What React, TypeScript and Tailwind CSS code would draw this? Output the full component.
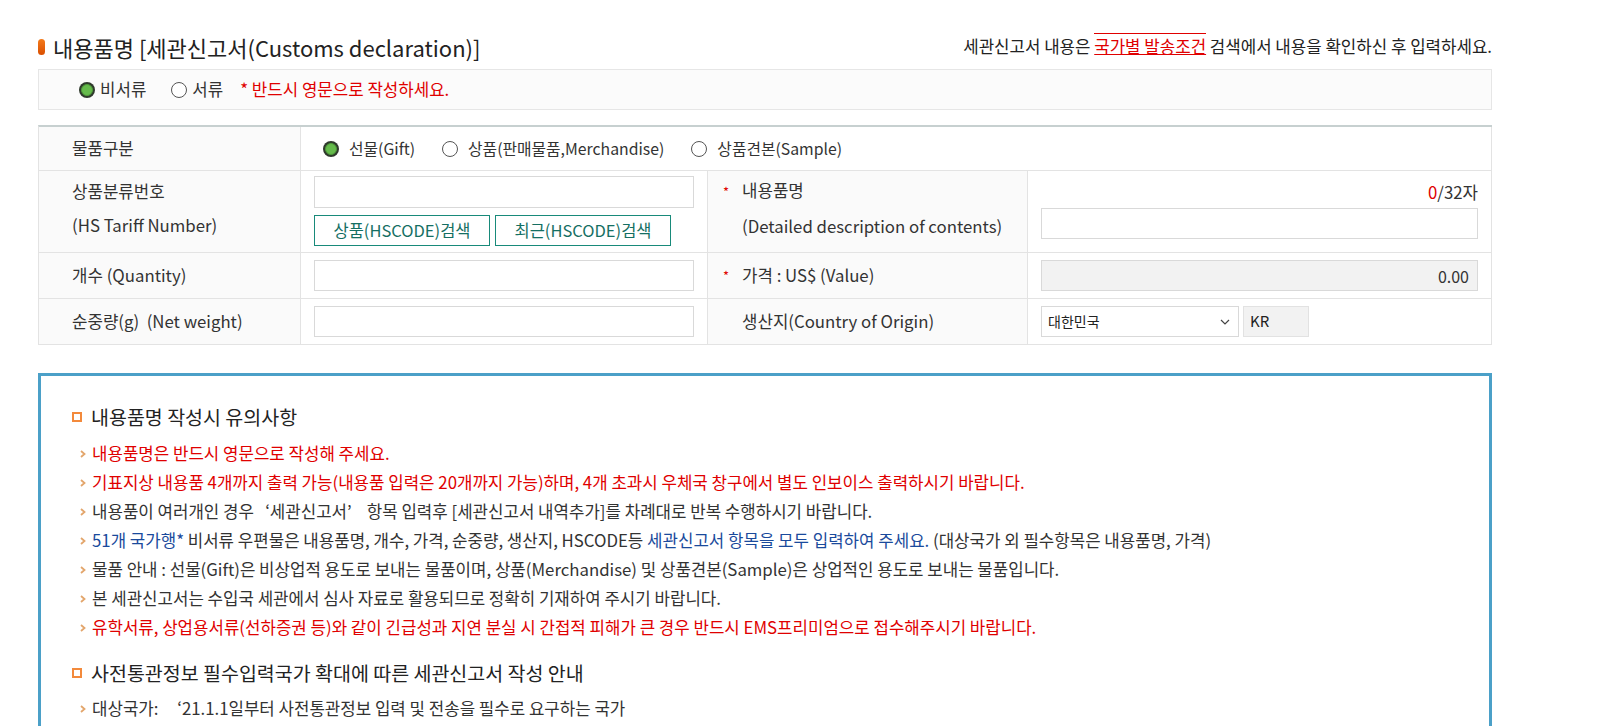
import React from "react";

function Radio({ checked }: { checked?: boolean }) {
  if (checked) {
    return (
      <span className="inline-flex h-[16px] w-[16px] shrink-0 items-center justify-center rounded-full bg-[#2f3a2c]">
        <span className="h-[12px] w-[12px] rounded-full border border-[#4e9a3a] bg-[#66bb4c]" />
      </span>
    );
  }
  return <span className="inline-block h-[16px] w-[16px] shrink-0 rounded-full border border-[#555] bg-white" />;
}

function Arrow() {
  return (
    <svg width="6" height="8" viewBox="0 0 6 8" className="mr-[6px] shrink-0">
      <path d="M1 1 L4.5 4 L1 7" fill="none" stroke="#e3a66c" strokeWidth="1.8" />
    </svg>
  );
}

function Star() {
  return <span className="-ml-[19px] inline-block w-[19px] text-[13px] text-[#e00000]">*</span>;
}

function Heading({ children }: { children: React.ReactNode }) {
  return (
    <div className="flex h-[24px] items-center text-[19.5px] text-[#222]">
      <span className="mr-[9px] inline-block h-[10px] w-[10px] border-2 border-[#f38a3c] bg-white" />
      {children}
    </div>
  );
}

function Item({ children, className }: { children: React.ReactNode; className?: string }) {
  return (
    <li className={"flex h-[29px] items-center pl-[8px] text-[16.8px] " + (className ?? "text-[#333]")}>
      <Arrow />
      <span>{children}</span>
    </li>
  );
}

const cell = "border-r border-b border-[#e3e3e3]";
const input = "h-[31px] border border-[#d9d9d9] bg-white";

export default function App() {
  return (
    <div className="min-h-screen bg-white font-['Noto_Sans_CJK_KR',sans-serif] text-[#333]">
      <div className="ml-[38px] w-[1454px] pt-[35px] pb-[40px]">
        {/* title row */}
        <div className="flex h-[24px] items-center justify-between">
          <h2 className="flex items-center text-[22px] text-[#222]">
            <span className="mr-[8px] inline-block h-[16px] w-[7px] rounded-full bg-gradient-to-b from-[#f47a1a] to-[#d94e00]" />
            내용품명 [세관신고서(Customs declaration)]
          </h2>
          <p className="text-[16.8px] text-[#222]">
            세관신고서 내용은{" "}
            <a className="border-t border-[#e00000] text-[#e00000] underline">국가별 발송조건</a> 검색에서 내용을 확인하신 후 입력하세요.
          </p>
        </div>

        {/* 서류 구분 */}
        <div className="mt-[10px] flex h-[41px] items-center border border-[#e6e6e6] bg-[#fbfbfb] pl-[40px] text-[16.8px]">
          <label className="flex items-center gap-[5px]">
            <Radio checked />
            비서류
          </label>
          <label className="ml-[25px] flex items-center gap-[5px]">
            <Radio />
            서류
          </label>
          <span className="ml-[17px] text-[#e00000]">* 반드시 영문으로 작성하세요.</span>
        </div>

        {/* form table */}
        <div className="mt-[15px] grid grid-cols-[262px_407px_320px_1fr] border-t-2 border-l border-t-[#c7d0d0] border-l-[#e3e3e3] text-[16.8px]">
          <div className={cell + " flex h-[44px] items-center bg-[#fafafa] pl-[33px]"}>물품구분</div>
          <div className={cell + " col-span-3 flex items-center pl-[22px] text-[15.8px]"}>
            <label className="flex items-center gap-[10px]">
              <Radio checked />
              선물(Gift)
            </label>
            <label className="ml-[27px] flex items-center gap-[10px]">
              <Radio />
              상품(판매물품,Merchandise)
            </label>
            <label className="ml-[27px] flex items-center gap-[10px]">
              <Radio />
              상품견본(Sample)
            </label>
          </div>

          <div className={cell + " flex h-[82px] flex-col justify-center bg-[#fafafa] pb-[7px] pl-[33px] leading-[34px]"}>
            <span>상품분류번호</span>
            <span>(HS Tariff Number)</span>
          </div>
          <div className={cell + " flex flex-col px-[13px] pt-[5px]"}>
            <div className="h-[32px] w-[380px] border border-[#d9d9d9] bg-white" />
            <div className="mt-[7px] flex gap-[5px]">
              <button className="h-[31px] w-[176px] border border-[#188a7a] bg-white text-[16.5px] text-[#156f63]">
                상품(HSCODE)검색
              </button>
              <button className="h-[31px] w-[176px] border border-[#188a7a] bg-white text-[16.5px] text-[#156f63]">
                최근(HSCODE)검색
              </button>
            </div>
          </div>
          <div className={cell + " flex flex-col justify-center bg-[#fafafa] pb-[7px] pl-[34px] leading-[34px]"}>
            <span>
              <Star />
              내용품명
            </span>
            <span>(Detailed description of contents)</span>
          </div>
          <div className={cell + " flex flex-col px-[13px] pt-[11px]"}>
            <div className="text-right leading-[20px]">
              <span className="text-[#e00000]">0</span>/32자
            </div>
            <div className={input + " mt-[6px]"} />
          </div>

          <div className={cell + " flex h-[46px] items-center bg-[#fafafa] pl-[33px]"}>개수 (Quantity)</div>
          <div className={cell + " flex items-center px-[13px]"}>
            <div className={input + " w-[380px]"} />
          </div>
          <div className={cell + " flex items-center bg-[#fafafa] pl-[34px]"}>
            <Star />
            가격 : US$ (Value)
          </div>
          <div className={cell + " flex items-center px-[13px]"}>
            <div className="flex h-[31px] w-full items-center justify-end border border-[#d9d9d9] bg-[#f2f2f2] pr-[8px] text-[16px]">
              0.00
            </div>
          </div>

          <div className={cell + " flex h-[46px] items-center bg-[#fafafa] pl-[33px]"}>순중량(g)&nbsp; (Net weight)</div>
          <div className={cell + " flex items-center px-[13px]"}>
            <div className={input + " w-[380px]"} />
          </div>
          <div className={cell + " flex items-center bg-[#fafafa] pl-[34px]"}>생산지(Country of Origin)</div>
          <div className={cell + " flex items-center gap-[4px] px-[13px]"}>
            <div className="flex h-[31px] w-[198px] items-center justify-between border border-[#d9d9d9] bg-white pr-[8px] pl-[6px] text-[14px] text-[#222]">
              대한민국
              <svg width="10" height="6" viewBox="0 0 10 6">
                <path d="M1 1 L5 5 L9 1" fill="none" stroke="#444" strokeWidth="1.2" />
              </svg>
            </div>
            <div className="flex h-[31px] w-[66px] items-center border border-[#e2e2e2] bg-[#f2f2f2] pl-[6px] text-[15px] text-[#222]">
              KR
            </div>
          </div>
        </div>

        {/* notice box */}
        <div className="mt-[28px] border-[3px] border-[#4ba0c8] pt-[29px] pr-[30px] pb-[60px] pl-[31px]">
          <Heading>내용품명 작성시 유의사항</Heading>
          <ul className="mt-[10px]">
            <Item className="text-[#e00000]">내용품명은 반드시 영문으로 작성해 주세요.</Item>
            <Item className="text-[#e00000]">
              기표지상 내용품 4개까지 출력 가능(내용품 입력은 20개까지 가능)하며, 4개 초과시 우체국 창구에서 별도 인보이스 출력하시기 바랍니다.
            </Item>
            <Item>
              내용품이 여러개인 경우 &nbsp;&nbsp;‘세관신고서’&nbsp;&nbsp;&nbsp; 항목 입력후 [세관신고서 내역추가]를 차례대로 반복 수행하시기 바랍니다.
            </Item>
            <Item>
              <span className="text-[#1a4a9c]">51개 국가행*</span> 비서류 우편물은 내용품명, 개수, 가격, 순중량, 생산지, HSCODE등{" "}
              <span className="text-[#1a4a9c]">세관신고서 항목을 모두 입력하여 주세요.</span> (대상국가 외 필수항목은 내용품명, 가격)
            </Item>
            <Item>
              물품 안내 : 선물(Gift)은 비상업적 용도로 보내는 물품이며, 상품(Merchandise) 및 상품견본(Sample)은 상업적인 용도로 보내는 물품입니다.
            </Item>
            <Item>본 세관신고서는 수입국 세관에서 심사 자료로 활용되므로 정확히 기재하여 주시기 바랍니다.</Item>
            <Item className="text-[#e00000]">
              유학서류, 상업용서류(선하증권 등)와 같이 긴급성과 지연 분실 시 간접적 피해가 큰 경우 반드시 EMS프리미엄으로 접수해주시기 바랍니다.
            </Item>
          </ul>
          <div className="mt-[19px]">
            <Heading>사전통관정보 필수입력국가 확대에 따른 세관신고서 작성 안내</Heading>
          </div>
          <ul className="mt-[9px]">
            <Item>대상국가: &nbsp;&nbsp;&nbsp;&nbsp;‘21.1.1일부터 사전통관정보 입력 및 전송을 필수로 요구하는 국가</Item>
          </ul>
        </div>
      </div>
    </div>
  );
}
